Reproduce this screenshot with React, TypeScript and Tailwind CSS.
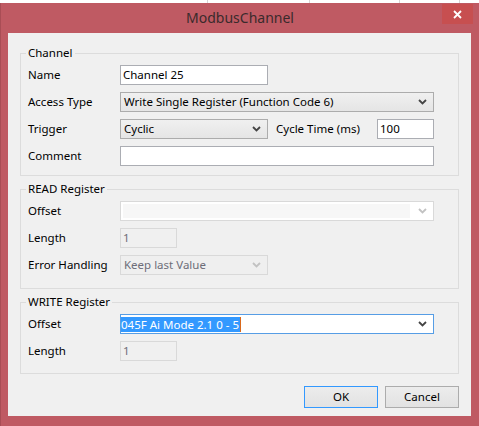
import React from 'react';

const Chevron: React.FC<{ disabled?: boolean }> = ({ disabled }) => (
    <svg width="9" height="6" viewBox="0 0 9 6" className="shrink-0">
        <path d="M1 1 L4.5 4.5 L8 1" fill="none" stroke={disabled ? '#c2c2c2' : '#444444'} strokeWidth="1.8" />
    </svg>
);

const Label: React.FC<{ children: React.ReactNode }> = ({ children }) => (
    <span className="w-[92px] shrink-0 text-black">{children}</span>
);

const TextBox: React.FC<{ value?: string; width: string; disabled?: boolean }> = ({ value, width, disabled }) => (
    <div
        className={`${width} h-[20px] shrink-0 flex items-center pl-[2px] border ${
            disabled ? 'border-[#d9d9d9] bg-[#f0f0f0] text-[#6d6d78]' : 'border-[#abadb3] bg-white text-black'
        }`}
    >
        {value}
    </div>
);

const Combo: React.FC<{ value?: string; width: string }> = ({ value, width }) => (
    <div className={`${width} h-[20px] shrink-0 flex items-center justify-between pl-[3px] pr-[6px] border border-[#acacac] bg-gradient-to-b from-[#f0f0f0] to-[#e5e5e5] text-black`}>
        <span>{value}</span>
        <Chevron />
    </div>
);

const DisabledCombo: React.FC<{ value?: string; width: string; editable?: boolean }> = ({ value, width, editable }) => (
    <div className={`${width} h-[20px] shrink-0 flex items-center justify-between pr-[6px] border border-[#d9d9d9] ${editable ? 'bg-white pl-[2px]' : 'bg-[#efefef] pl-[3px]'} text-[#6d6d78]`}>
        {editable ? <div className="h-[14px] flex-1 mr-[8px] bg-[#f7f7f7]" /> : <span>{value}</span>}
        <Chevron disabled />
    </div>
);

const Group: React.FC<{ title: string; className?: string; children: React.ReactNode }> = ({ title, className, children }) => (
    <fieldset className={`border border-[#dcdcdc] px-[7px] ${className ?? ''}`}>
        <legend className="px-[2px] -ml-[2px] leading-[16px] text-black">{title}</legend>
        {children}
    </fieldset>
);

export default function App() {
    return (
        <div className="w-[479px] h-[426px] bg-white font-['Noto_Sans',sans-serif] text-[11.5px] overflow-hidden">
            {/* background window edge */}
            <div className="h-[3px] flex">
                <div className="w-[208px] border-r border-[#d6d6d6]" />
                <div className="w-[102px] border-r border-[#d6d6d6]" />
                <div className="w-[90px] border-r border-[#d6d6d6]" />
                <div className="w-[60px] border-r border-[#d6d6d6]" />
            </div>

            <div className="h-[423px] bg-[#bf5a63] border-l border-[#a94d55] flex flex-col">
                {/* title bar */}
                <div className="h-[30px] grid grid-cols-[1fr_auto_1fr] items-start px-[6px] pt-[1px]">
                    <div />
                    <div className="text-[14px] leading-[30px] -mt-[1px] text-[#3a2a2c]">ModbusChannel</div>
                    <div className="flex justify-end">
                        <div className="w-[31px] h-[20px] bg-[#c74f50] flex items-center justify-center">
                            <svg width="9" height="9" viewBox="0 0 9 9">
                                <path d="M1 1 L8 8 M8 1 L1 8" stroke="white" strokeWidth="1.8" />
                            </svg>
                        </div>
                    </div>
                </div>

                {/* client area */}
                <div className="ml-[7px] mr-[8px] h-[383px] bg-[#f0f0f0] px-[12px] pt-[12px] flex flex-col">
                    <Group title="Channel" className="pt-[4px] pb-[9px]">
                        <div className="flex flex-col gap-[7px]">
                            <div className="flex items-center">
                                <Label>Name</Label>
                                <TextBox value="Channel 25" width="w-[148px]" />
                            </div>
                            <div className="flex items-center">
                                <Label>Access Type</Label>
                                <Combo value="Write Single Register (Function Code 6)" width="w-[314px]" />
                            </div>
                            <div className="flex items-center">
                                <Label>Trigger</Label>
                                <Combo value="Cyclic" width="w-[148px]" />
                                <span className="w-[109px] shrink-0 pl-[8px] text-black">Cycle Time (ms)</span>
                                <TextBox value="100" width="w-[57px]" />
                            </div>
                            <div className="flex items-center">
                                <Label>Comment</Label>
                                <TextBox width="w-[314px]" />
                            </div>
                        </div>
                    </Group>

                    <Group title="READ Register" className="mt-[5px] pt-[4px] pb-[13px]">
                        <div className="flex flex-col gap-[7px]">
                            <div className="flex items-center">
                                <Label>Offset</Label>
                                <DisabledCombo width="w-[314px]" editable />
                            </div>
                            <div className="flex items-center">
                                <Label>Length</Label>
                                <TextBox value="1" width="w-[57px]" disabled />
                            </div>
                            <div className="flex items-center">
                                <Label>Error Handling</Label>
                                <DisabledCombo value="Keep last Value" width="w-[148px]" />
                            </div>
                        </div>
                    </Group>

                    <Group title="WRITE Register" className="mt-[5px] pt-[4px] pb-[12px]">
                        <div className="flex flex-col gap-[7px]">
                            <div className="flex items-center">
                                <Label>Offset</Label>
                                <div className="w-[314px] h-[20px] shrink-0 flex items-center justify-between pr-[6px] border border-[#569de5] bg-white">
                                    <span className="flex items-center h-[15px]">
                                        <span className="bg-[#3399ff] text-white h-[15px] leading-[15px] pr-[1px]">045F Ai Mode 2.1 0 - 5</span>
                                        <span className="w-[1px] h-[15px] bg-[#d9691c]" />
                                    </span>
                                    <Chevron />
                                </div>
                            </div>
                            <div className="flex items-center">
                                <Label>Length</Label>
                                <TextBox value="1" width="w-[57px]" disabled />
                            </div>
                        </div>
                    </Group>

                    <div className="mt-[12px] flex justify-end gap-[7px]">
                        <button className="w-[74px] h-[22px] border border-[#3399ff] bg-gradient-to-b from-[#ececec] to-[#e2e2e2] text-black">
                            OK
                        </button>
                        <button className="w-[74px] h-[22px] border border-[#acacac] bg-gradient-to-b from-[#ececec] to-[#e2e2e2] text-black">
                            Cancel
                        </button>
                    </div>
                </div>
            </div>
        </div>
    );
}
